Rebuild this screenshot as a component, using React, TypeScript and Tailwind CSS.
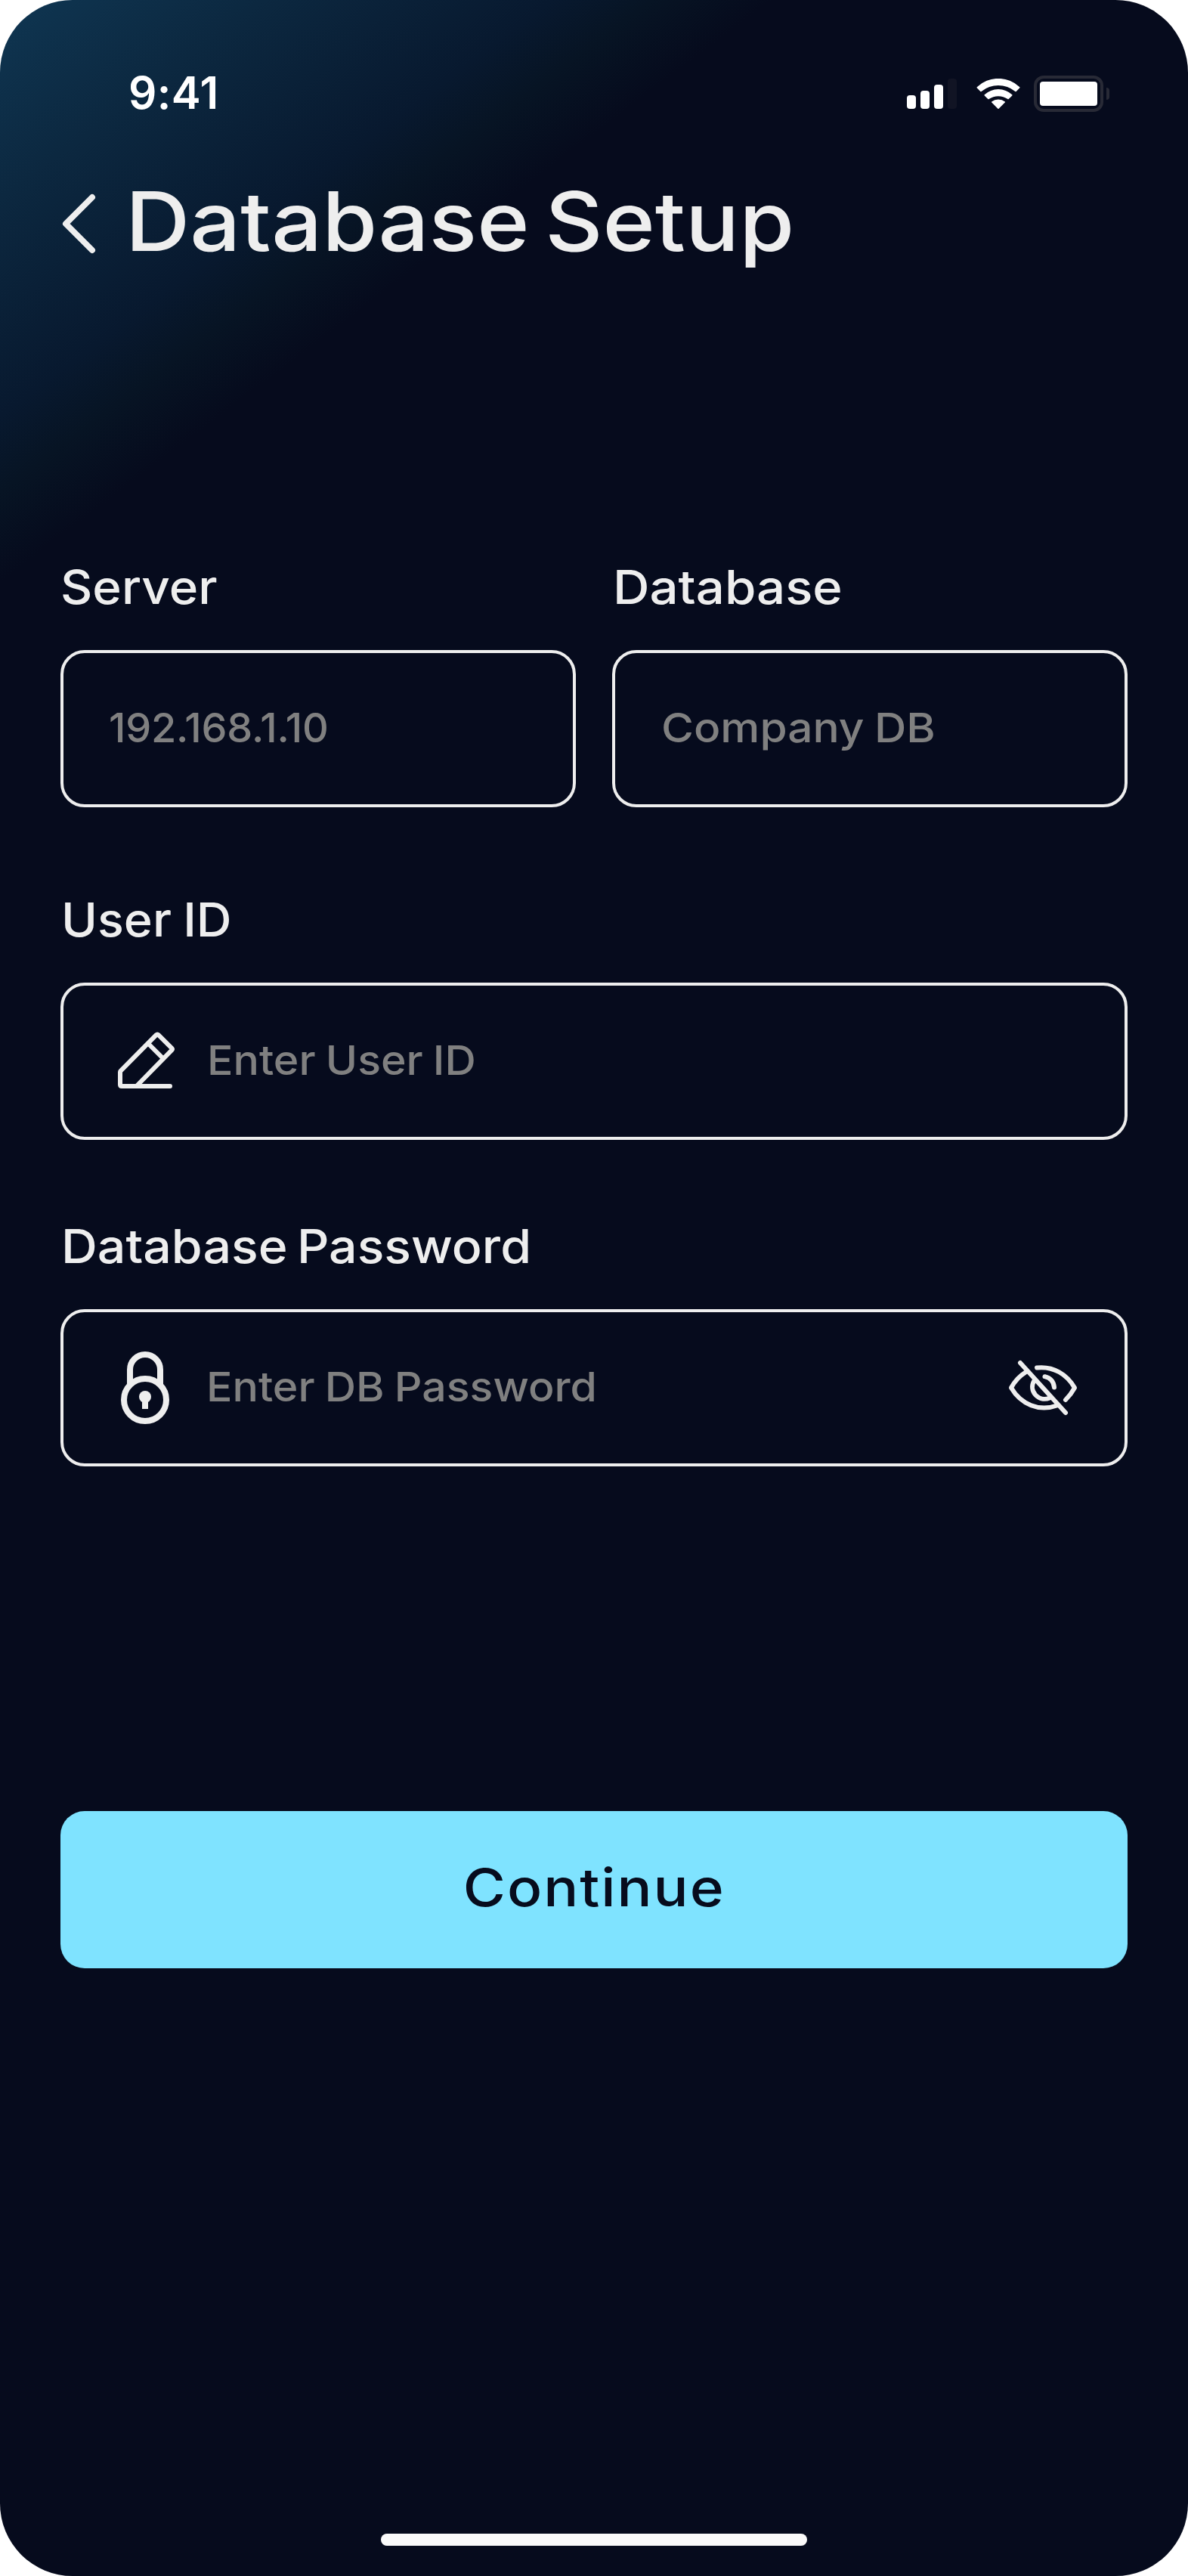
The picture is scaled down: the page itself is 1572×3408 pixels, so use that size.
import React from "react";

const BackIcon = () => (
  <svg className="h-[84px] w-[50px]" viewBox="80 254 50 84" fill="none" stroke="#eeeeee" strokeWidth="8" strokeLinecap="round" strokeLinejoin="round">
    <path d="M122 261 87 296l35 35" />
  </svg>
);

const WifiIcon = () => (
  <svg className="h-10 w-[58px]" viewBox="1291.5 104 58 40" fill="#ffffff">
    <path d="M1292.2 115.2a41 41 0 0 1 56.6 0q.5.6 0 1.100l-4.600 4.700q-.6.6-1.300 0a35.600 35.600 0 0 0-44.800 0q-.7.6-1.300 0l-4.600-4.700q-.5-.5 0-1.100Z" />
    <path d="M1302.200 125.200a27 27 0 0 1 36.600 0q.6.6 0 1.200l-4.600 4.500q-.6.600-1.300.1a22 22 0 0 0-24.800 0q-.7.500-1.300-.1l-4.600-4.500q-.6-.6 0-1.200Z" />
    <path d="M1311.700 134.400a14.500 14.500 0 0 1 17.600 0q.6.500 0 1.100l-8.200 8.200q-.6.600-1.200 0l-8.200-8.200q-.6-.6 0-1.100Z" />
  </svg>
);

const PencilIcon = () => (
  <svg className="h-[84px] w-[80px]" viewBox="154 1360 80 84" fill="none" stroke="#eeeeee" strokeWidth="6" strokeLinecap="round" strokeLinejoin="round">
    <path d="M225 1437h-64q-2 0-2-2v-16.500q0-1 .8-1.800l47-47.500q1.400-1.400 2.800 0l17.600 17.400q1.400 1.400 0 2.800L181.500 1436" />
    <path d="m196 1380.500 19 19" strokeLinecap="butt" />
  </svg>
);

const LockIcon = () => (
  <svg className="h-24 w-16" viewBox="160 1788 64 96" fill="none" stroke="#eeeeee" strokeWidth="8">
    <path d="M172 1833v-21a20 20 0 0 1 40 0v21" />
    <circle cx="192" cy="1852" r="28" />
    <circle cx="192" cy="1848" r="8" fill="#eeeeee" stroke="none" />
    <path d="M192 1850v14" />
  </svg>
);

const EyeOffIcon = () => (
  <svg className="h-[76px] w-[92px]" viewBox="1334 1798 92 76" fill="none" stroke="#eeeeee" strokeWidth="6" strokeLinecap="round" strokeLinejoin="round">
    <path d="m1350 1803 60 66" />
    <path d="M1372 1809.500c22-2.500 40 9 50 26.500q-5 9-12 16" />
    <path d="M1357 1815.500q-12 7.500-19 20.500c13 22 37 32 60.500 23.500" />
    <path d="M1368.500 1826.500c-8 13 5 29 20.500 23" />
    <path d="M1382.500 1821.200q11.500 2.800 12.500 14.300" />
  </svg>
);

const StatusBar = () => (
  <header className="flex h-11 items-center justify-between pr-[104px] pl-[170px]">
    <span className="text-[58.500px] leading-[44px] font-semibold tracking-[0.400px] text-white">9:41</span>
    <div className="mt-[2px] flex h-12 items-center">
      <div className="flex h-10 items-end gap-[6px]">
        <i className="h-[18px] w-3 rounded-[4px] bg-white" />
        <i className="h-6 w-3 rounded-[4px] bg-white" />
        <i className="h-8 w-3 rounded-[4px] bg-white" />
        <i className="h-10 w-3 rounded-[4px] bg-[#111424]" />
      </div>
      <div className="ml-[25.500px] flex">
        <WifiIcon />
      </div>
      <div className="ml-[18.500px] h-12 w-[92px] rounded-[13px] border-4 border-[#282a36] p-1">
        <div className="h-full rounded-[4px] bg-white" />
      </div>
      <div className="ml-1 h-4 w-1 rounded-r-[4px] bg-[#282a36]" />
    </div>
  </header>
);

type FieldProps = {
  label: string;
  labelClass: string;
  placeholder: string;
  placeholderClass: string;
  boxClass: string;
  icon?: React.ReactNode;
  trailing?: React.ReactNode;
};

const Field = ({ label, labelClass, placeholder, placeholderClass, boxClass, icon, trailing }: FieldProps) => (
  <div className="flex min-w-0 flex-1 flex-col">
    <label className={`h-20 origin-left self-start text-[62px] leading-[80px] whitespace-nowrap text-[#eeeeee] ${labelClass}`}>{label}</label>
    <div className={`mt-[43px] flex h-52 items-center rounded-[32px] border-4 border-[#eeeeee] ${boxClass}`}>
      {icon}
      <span className={`-mt-[3px] origin-left text-[54px] leading-[64px] whitespace-nowrap text-[#808080] ${placeholderClass}`}>{placeholder}</span>
      {trailing && <div className="ml-auto">{trailing}</div>}
    </div>
  </div>
);

export default function App() {
  return (
    <div className="h-[3408px] w-[1572px] bg-white">
      <main className="flex h-full w-full flex-col overflow-hidden rounded-[96px] bg-[linear-gradient(143deg,#0f3652_0px,#0c2840_210px,#08192f_440px,#071424_520px,#060b1d_615px)] pt-[101px] font-['Inter',sans-serif] font-medium">
        <StatusBar />

        <div className="mt-[88px] flex h-[120px] items-center pl-20">
          <div className="mt-[6px]">
            <BackIcon />
          </div>
          <h1 className="ml-[36px] origin-left scale-x-[1.094] text-[108px] leading-[120px] whitespace-nowrap text-[#eeeeee] [word-spacing:-10px]">Database Setup</h1>
        </div>

        <form className="mt-[384px] flex flex-col px-20">
          <div className="flex gap-12">
            <Field label="Server" labelClass="scale-x-[1.058]" placeholder="192.168.1.10" placeholderClass="tracking-[-0.240px]" boxClass="pl-[60px]" />
            <Field label="Database" labelClass="ml-[1px] scale-x-[1.083]" placeholder="Company DB" placeholderClass="scale-x-[1.085] [word-spacing:-2px]" boxClass="pl-[61px]" />
          </div>
          <div className="mt-[109px] flex">
            <Field
              label="User ID"
              labelClass="ml-[1px] scale-x-[1.045] [word-spacing:-2px]"
              placeholder="Enter User ID"
              placeholderClass="ml-10 scale-x-[1.060] [word-spacing:-2px]"
              boxClass="pl-[70px]"
              icon={<div className="-mt-1"><PencilIcon /></div>}
            />
          </div>
          <div className="mt-[101px] flex">
            <Field
              label="Database Password"
              labelClass="ml-[1px] scale-x-[1.068] [word-spacing:-5px]"
              placeholder="Enter DB Password"
              placeholderClass="ml-[49px] scale-x-[1.060] [word-spacing:-2px]"
              boxClass="pr-[62px] pl-[76px]"
              icon={<LockIcon />}
              trailing={<EyeOffIcon />}
            />
          </div>
          <button type="button" className="mt-[456px] flex h-52 items-center justify-center rounded-[32px] bg-[#7fe3ff] pb-[6px] text-[69px] leading-none tracking-[1.780px] text-[#070c1d]">
            <span className="scale-x-[1.110]">Continue</span>
          </button>
        </form>

        <div className="mt-auto mb-10 h-4 w-[564px] self-center rounded-full bg-[#fafafa]" />
      </main>
    </div>
  );
}
